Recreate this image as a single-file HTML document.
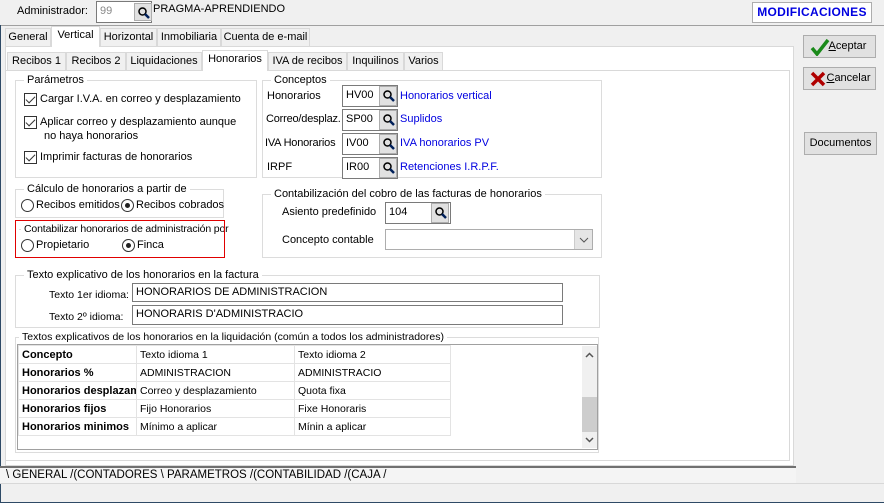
<!DOCTYPE html>
<html><head><meta charset="utf-8"><style>
*{box-sizing:border-box;margin:0;padding:0}
body{width:884px;height:503px;background:#f0f0f0;font-family:"Liberation Sans",sans-serif;font-size:11px;color:#000;position:relative;overflow:hidden}
.a{position:absolute;white-space:nowrap}
.tab{position:absolute;background:#f0f0f0;border:1px solid #d9d9d9;border-bottom:none;text-align:center;line-height:17px;white-space:nowrap;overflow:hidden}
.tab.sel{background:#fff}
.grp{position:absolute;border:1px solid #dcdcdc}
.gl{position:absolute;top:-8px;left:8px;background:#fff;padding:0 3px;line-height:14px;white-space:nowrap}
.inp{position:absolute;background:#fff;border:1px solid #7a7a7a;line-height:18px;padding-left:3px;white-space:nowrap}
.sb{position:absolute;width:18px;background:#e1e1e1;border:1px solid #adadad}
.sb svg{position:absolute;left:2px;top:2px}
.cb{position:absolute;width:13px;height:13px;border:1px solid #333;background:#fff}
.cb:after{content:"";position:absolute;left:3px;top:0px;width:4px;height:8px;border:solid #333;border-width:0 1px 1px 0;transform:rotate(45deg)}
.rb{position:absolute;width:13px;height:13px;border:1px solid #333;border-radius:50%;background:#fff}
.rb.on:after{content:"";position:absolute;left:3px;top:3px;width:5px;height:5px;border-radius:50%;background:#222}
.btn{position:absolute;background:#e1e1e1;border:1px solid #adadad;line-height:20px;text-align:center;white-space:nowrap}
.blue{color:#0000e0}
table{border-collapse:collapse}
td{border:1px solid #e3e3e3;height:18px;padding-left:3px;font-size:10.5px;white-space:nowrap;overflow:hidden}
</style></head><body>
<div class="a" style="left:0;top:25px;width:884px;height:1px;background:#a0a0a0"></div>
<div class="a" style="left:0;top:25px;width:1px;height:478px;background:#2e4a66"></div>
<div class="a" style="left:0;top:502px;width:884px;height:1px;background:#2e4a66"></div>
<div class="a" style="left:17px;top:5px">Administrador:</div>
<div class="inp" style="left:96px;top:1px;width:56px;height:22px;color:#888">99</div>
<div class="sb" style="left:134px;top:3px;height:18px"><svg width="14" height="14"><circle cx="5.5" cy="5.5" r="3.5" fill="none" stroke="#000" stroke-width="1.5"/><path d="M8 8l4 4" stroke="#00205a" stroke-width="2.5"/></svg></div>
<div class="a" style="left:153px;top:3px">PRAGMA-APRENDIENDO</div>
<div class="a" style="left:752px;top:2px;width:120px;height:21px;background:#fff;border:1px solid #adadad;color:#0000e0;font-weight:bold;font-size:12px;text-align:center;line-height:19px;letter-spacing:.3px">MODIFICACIONES</div>

<div class="a" style="left:5px;top:46px;width:789px;height:420px;background:#fff;border:1px solid #d9d9d9"></div>
<div class="tab" style="left:5px;top:28px;width:46px;height:18px">General</div>
<div class="tab sel" style="left:51px;top:26px;width:49px;height:21px">Vertical</div>
<div class="tab" style="left:100px;top:28px;width:57px;height:18px">Horizontal</div>
<div class="tab" style="left:157px;top:28px;width:64px;height:18px">Inmobiliaria</div>
<div class="tab" style="left:221px;top:28px;width:89px;height:18px">Cuenta de e-mail</div>

<div class="a" style="left:5px;top:70px;width:785px;height:391px;border:1px solid #d9d9d9"></div>
<div class="tab" style="left:7px;top:52px;width:59px;height:18px">Recibos 1</div>
<div class="tab" style="left:66px;top:52px;width:60px;height:18px">Recibos 2</div>
<div class="tab" style="left:126px;top:52px;width:76px;height:18px">Liquidaciones</div>
<div class="tab sel" style="left:202px;top:50px;width:66px;height:21px">Honorarios</div>
<div class="tab" style="left:268px;top:52px;width:79px;height:18px">IVA de recibos</div>
<div class="tab" style="left:347px;top:52px;width:57px;height:18px">Inquilinos</div>
<div class="tab" style="left:404px;top:52px;width:39px;height:18px">Varios</div>

<div class="grp" style="left:15px;top:80px;width:242px;height:98px"><div class="gl">Parámetros</div></div>
<div class="cb" style="left:24px;top:93px"></div><div class="a" style="left:40px;top:93px">Cargar I.V.A. en correo y desplazamiento</div>
<div class="cb" style="left:24px;top:116px"></div><div class="a" style="left:40px;top:116px">Aplicar correo y desplazamiento aunque</div>
<div class="a" style="left:44px;top:130px">no haya honorarios</div>
<div class="cb" style="left:24px;top:151px"></div><div class="a" style="left:40px;top:151px">Imprimir facturas de honorarios</div>

<div class="grp" style="left:262px;top:80px;width:340px;height:98px"><div class="gl">Conceptos</div></div>
<div class="a" style="left:267px;top:90px">Honorarios</div>
<div class="inp" style="left:342px;top:85px;width:56px;height:22px">HV00</div><div class="sb" style="left:379px;top:86px;height:20px"><svg width="14" height="14"><circle cx="5.5" cy="5.5" r="3.5" fill="none" stroke="#000" stroke-width="1.5"/><path d="M8 8l4 4" stroke="#00205a" stroke-width="2.5"/></svg></div>
<div class="a blue" style="left:400px;top:90px">Honorarios vertical</div>
<div class="a" style="left:266px;top:113px;letter-spacing:-0.2px">Correo/desplaz.</div>
<div class="inp" style="left:342px;top:109px;width:56px;height:22px">SP00</div><div class="sb" style="left:379px;top:110px;height:20px"><svg width="14" height="14"><circle cx="5.5" cy="5.5" r="3.5" fill="none" stroke="#000" stroke-width="1.5"/><path d="M8 8l4 4" stroke="#00205a" stroke-width="2.5"/></svg></div>
<div class="a blue" style="left:400px;top:113px">Suplidos</div>
<div class="a" style="left:265px;top:137px;letter-spacing:-0.2px">IVA Honorarios</div>
<div class="inp" style="left:342px;top:133px;width:56px;height:22px">IV00</div><div class="sb" style="left:379px;top:134px;height:20px"><svg width="14" height="14"><circle cx="5.5" cy="5.5" r="3.5" fill="none" stroke="#000" stroke-width="1.5"/><path d="M8 8l4 4" stroke="#00205a" stroke-width="2.5"/></svg></div>
<div class="a blue" style="left:400px;top:137px">IVA honorarios PV</div>
<div class="a" style="left:267px;top:161px">IRPF</div>
<div class="inp" style="left:342px;top:157px;width:56px;height:22px">IR00</div><div class="sb" style="left:379px;top:158px;height:20px"><svg width="14" height="14"><circle cx="5.5" cy="5.5" r="3.5" fill="none" stroke="#000" stroke-width="1.5"/><path d="M8 8l4 4" stroke="#00205a" stroke-width="2.5"/></svg></div>
<div class="a blue" style="left:400px;top:161px">Retenciones I.R.P.F.</div>

<div class="grp" style="left:15px;top:189px;width:209px;height:29px"><div class="gl">Cálculo de honorarios a partir de</div></div>
<div class="rb" style="left:21px;top:199px"></div><div class="a" style="left:36px;top:199px">Recibos emitidos</div>
<div class="rb on" style="left:121px;top:199px"></div><div class="a" style="left:136px;top:199px">Recibos cobrados</div>

<div class="a" style="left:19px;top:229px;width:202px;height:1px;background:#dcdcdc"></div>
<div class="a" style="left:21px;top:222px;background:#fff;padding:0 3px;line-height:14px;font-size:10.5px;letter-spacing:-0.15px">Contabilizar honorarios de administración por</div>
<div class="a" style="left:15px;top:220px;width:210px;height:38px;border:1px solid #e00000"></div>
<div class="rb" style="left:21px;top:239px"></div><div class="a" style="left:36px;top:239px">Propietario</div>
<div class="rb on" style="left:122px;top:239px"></div><div class="a" style="left:137px;top:239px">Finca</div>

<div class="grp" style="left:262px;top:194px;width:340px;height:64px"><div class="gl">Contabilización del cobro de las facturas de honorarios</div></div>
<div class="a" style="left:282px;top:206px">Asiento predefinido</div>
<div class="inp" style="left:385px;top:202px;width:66px;height:22px">104</div>
<div class="sb" style="left:431px;top:203px;height:20px"><svg width="14" height="14"><circle cx="5.5" cy="5.5" r="3.5" fill="none" stroke="#000" stroke-width="1.5"/><path d="M8 8l4 4" stroke="#00205a" stroke-width="2.5"/></svg></div>
<div class="a" style="left:282px;top:234px">Concepto contable</div>
<div class="a" style="left:385px;top:229px;width:208px;height:21px;border:1px solid #adadad;background:#fff"></div>
<div class="a" style="left:574px;top:230px;width:18px;height:19px;background:#e5e5e5;border-left:1px solid #ccc"><svg width="18" height="19"><path d="M5 8l4 4 4-4" fill="none" stroke="#555"/></svg></div>

<div class="grp" style="left:15px;top:275px;width:585px;height:53px"><div class="gl">Texto explicativo de los honorarios en la factura</div></div>
<div class="a" style="left:49px;top:289px;font-size:10.5px">Texto 1er idioma:</div>
<div class="inp" style="left:132px;top:283px;width:431px;height:19px;line-height:16px">HONORARIOS DE ADMINISTRACION</div>
<div class="a" style="left:49px;top:311px;font-size:10.5px">Texto 2º idioma:</div>
<div class="inp" style="left:132px;top:305px;width:431px;height:20px;line-height:17px">HONORARIS D'ADMINISTRACIO</div>

<div class="grp" style="left:15px;top:337px;width:584px;height:116px"><div class="gl" style="left:3px;font-size:10.5px">Textos explicativos de los honorarios en la liquidación (común a todos los administradores)</div></div>
<div class="a" style="left:17px;top:344px;width:581px;height:106px;border:1px solid #a0a0a0;background:#fff;overflow:hidden">
<table style="position:absolute;left:0;top:0;table-layout:fixed;width:432px">
<col style="width:118px"><col style="width:158px"><col style="width:156px">
<tr><td style="font-weight:bold;font-size:11px">Concepto</td><td>Texto idioma 1</td><td>Texto idioma 2</td></tr>
<tr><td style="font-weight:bold;font-size:11px">Honorarios %</td><td>ADMINISTRACION</td><td>ADMINISTRACIO</td></tr>
<tr><td style="font-weight:bold;font-size:11px">Honorarios desplazamiento</td><td>Correo y desplazamiento</td><td>Quota fixa</td></tr>
<tr><td style="font-weight:bold;font-size:11px">Honorarios fijos</td><td>Fijo Honorarios</td><td>Fixe Honoraris</td></tr>
<tr><td style="font-weight:bold;font-size:11px">Honorarios minimos</td><td>Mínimo a aplicar</td><td>Mínin a aplicar</td></tr>
</table>
<div class="a" style="left:564px;top:1px;width:15px;height:102px;background:#f0f0f0"></div>
<div class="a" style="left:564px;top:52px;width:15px;height:35px;background:#cdcdcd"></div>
<svg class="a" style="left:565px;top:6px" width="13" height="8"><path d="M3 6l3.5-3.5L10 6" fill="none" stroke="#555" stroke-width="1.5"/></svg>
<svg class="a" style="left:565px;top:91px" width="13" height="8"><path d="M3 2l3.5 3.5L10 2" fill="none" stroke="#555" stroke-width="1.5"/></svg>
</div>

<div class="a" style="left:0;top:466px;width:796px;height:2px;background:#707070"></div>
<div class="a" style="left:0;top:468px;width:796px;height:15px;background:#f4f4f4;font-size:11.5px;line-height:15px;padding-left:6px">\ GENERAL /(CONTADORES \ PARAMETROS /(CONTABILIDAD /(CAJA /</div>
<div class="a" style="left:0;top:483px;width:884px;height:1px;background:#d8d8d8"></div>

<div class="btn" style="left:803px;top:35px;width:73px;height:23px;padding-left:16px"><svg class="a" style="left:6px;top:2px" width="20" height="18"><path d="M2 10l5 6L18 2" fill="none" stroke="#1a8a1a" stroke-width="3.5"/></svg><u>A</u>ceptar</div>
<div class="btn" style="left:803px;top:67px;width:73px;height:23px;padding-left:18px"><svg class="a" style="left:6px;top:3px" width="16" height="16"><path d="M2 2l12 12M14 2L2 14" stroke="#b00000" stroke-width="3.5"/></svg><u>C</u>ancelar</div>
<div class="btn" style="left:804px;top:132px;width:73px;height:23px">Documentos</div>
</body></html>
